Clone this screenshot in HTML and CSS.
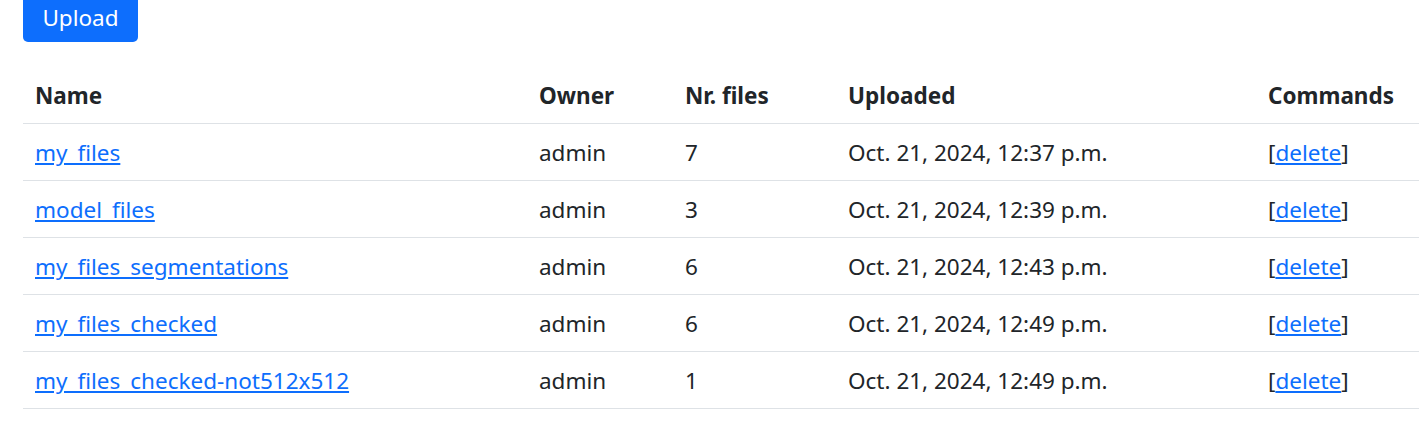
FILE: index.html
```html
<!DOCTYPE html>
<html lang="en">
<head>
<meta charset="utf-8">
<title>Uploads</title>
<link rel="stylesheet" href="styles.css">
</head>
<body>
<main class="page">
  <button class="btn-upload" type="button">Upload</button>
  <table class="files">
    <colgroup>
      <col class="c-name"><col class="c-owner"><col class="c-nr"><col class="c-up"><col class="c-cmd">
    </colgroup>
    <thead>
      <tr><th>Name</th><th>Owner</th><th>Nr. files</th><th>Uploaded</th><th>Commands</th></tr>
    </thead>
    <tbody>
      <tr><td><a href="#">my_files</a></td><td>admin</td><td>7</td><td>Oct. 21, 2024, 12:37 p.m.</td><td>[<a href="#">delete</a>]</td></tr>
      <tr><td><a href="#">model_files</a></td><td>admin</td><td>3</td><td>Oct. 21, 2024, 12:39 p.m.</td><td>[<a href="#">delete</a>]</td></tr>
      <tr><td><a href="#">my_files_segmentations</a></td><td>admin</td><td>6</td><td>Oct. 21, 2024, 12:43 p.m.</td><td>[<a href="#">delete</a>]</td></tr>
      <tr><td><a href="#">my_files_checked</a></td><td>admin</td><td>6</td><td>Oct. 21, 2024, 12:49 p.m.</td><td>[<a href="#">delete</a>]</td></tr>
      <tr><td><a href="#">my_files_checked-not512x512</a></td><td>admin</td><td>1</td><td>Oct. 21, 2024, 12:49 p.m.</td><td>[<a href="#">delete</a>]</td></tr>
    </tbody>
  </table>
</main>
</body>
</html>
```

FILE: styles.css
```css
html, body {
  margin: 0;
  padding: 0;
  background: #fff;
}
body {
  font-family: "Noto Sans", "Open Sans", sans-serif;
  font-size: 22.5px;
  line-height: 34px;
  color: #212529;
  overflow: hidden;
}
.page {
  padding-left: 23px;
}
.btn-upload {
  display: block;
  margin-top: -6px;
  width: 115px;
  height: 48px;
  padding: 0;
  border: 0;
  border-radius: 5px;
  background: #0d6efd;
  color: #fff;
  font-family: inherit;
  font-size: 22.5px;
  line-height: 34px;
  text-align: center;
}
.files {
  margin-top: 25px;
  width: 1396px;
  border-collapse: collapse;
  table-layout: fixed;
}
.c-name { width: 504px; }
.c-owner { width: 146px; }
.c-nr { width: 163px; }
.c-up { width: 420px; }
.c-cmd { width: 163px; }
.files th,
.files td {
  padding: 12px 12px 10px;
  text-align: left;
  vertical-align: top;
  border-bottom: 1px solid #dee2e6;
  white-space: nowrap;
}
.files th {
  font-weight: 700;
}
.files a {
  color: #0d6efd;
  text-decoration: underline;
}
```
